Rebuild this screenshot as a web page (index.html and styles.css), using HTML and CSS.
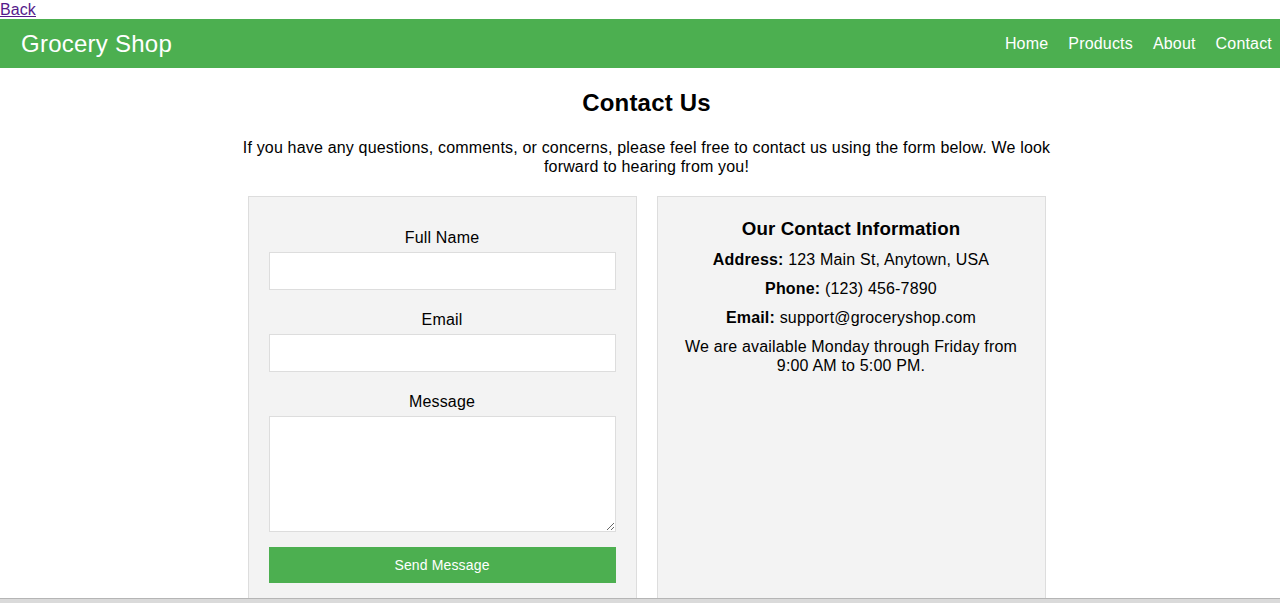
FILE: index.html
```html
<!DOCTYPE html>
<html lang="en">
<head>
<meta charset="utf-8">
<title>Contact Us - Grocery Shop</title>
<link rel="stylesheet" href="styles.css">
</head>
<body>
<a class="back" href="#">Back</a>
<header class="site-header">
  <h1 class="brand">Grocery Shop</h1>
  <nav class="nav">
    <a href="#">Home</a>
    <a href="#">Products</a>
    <a href="#">About</a>
    <a href="#">Contact</a>
  </nav>
</header>
<main class="main">
  <div class="container">
    <h2 class="title">Contact Us</h2>
    <p class="intro">If you have any questions, comments, or concerns, please feel free to contact us using the form below. We look forward to hearing from you!</p>
    <div class="panels">
      <form class="panel form">
        <div class="field">
          <label for="name">Full Name</label>
          <input id="name" type="text">
        </div>
        <div class="field">
          <label for="email">Email</label>
          <input id="email" type="email">
        </div>
        <div class="field field-msg">
          <label for="msg">Message</label>
          <textarea id="msg"></textarea>
        </div>
        <button type="button" class="send">Send Message</button>
      </form>
      <section class="panel info">
        <h3>Our Contact Information</h3>
        <p><strong>Address:</strong> 123 Main St, Anytown, USA</p>
        <p><strong>Phone:</strong> (123) 456-7890</p>
        <p><strong>Email:</strong> support@groceryshop.com</p>
        <p>We are available Monday through Friday from 9:00 AM to 5:00 PM.</p>
      </section>
    </div>
  </div>
</main>
<div class="bottom-edge"></div>
</body>
</html>
```

FILE: styles.css
```css
html, body {
  margin: 0;
  padding: 0;
}
body {
  font-family: "Liberation Sans", Arial, sans-serif;
  font-size: 16px;
  line-height: 1.2;
  letter-spacing: 0.18px;
  color: #000;
  background: #fff;
}
.back {
  display: block;
  color: #551a8b;
  text-decoration: underline;
  line-height: 19px;
  height: 19px;
  letter-spacing: 0.1px;
}
.site-header {
  background: #4caf50;
  display: flex;
  align-items: center;
  justify-content: space-between;
  height: 49px;
  box-sizing: border-box;
  padding: 1px 8px 0 21px;
}
.brand {
  margin: 0;
  font-size: 24px;
  font-weight: normal;
  letter-spacing: 0.25px;
  color: #fff;
}
.nav {
  display: flex;
  gap: 20px;
}
.nav a {
  color: #fff;
  text-decoration: none;
  font-size: 16px;
}
.main {
  padding: 20px 0 0 13px;
}
.container {
  width: 820px;
  margin: 0 auto;
  text-align: center;
}
.title {
  margin: 0 0 21px;
  font-size: 24px;
  line-height: 29px;
  letter-spacing: 0.2px;
}
.intro {
  margin: 0 0 20px;
  line-height: 19px;
}
.panels {
  display: flex;
  gap: 20px;
  width: 798px;
  margin: 0 auto;
}
.panel {
  flex: 1;
  background: #f3f3f3;
  border: 1px solid #dddddd;
  padding: 20px;
  min-height: 420px;
}
.form {
  padding-top: 32px;
  display: flex;
  flex-direction: column;
}
.field {
  display: flex;
  flex-direction: column;
  margin-bottom: 21px;
}
.field label {
  line-height: 18px;
  margin-bottom: 5px;
}
.field input,
.field textarea {
  box-sizing: border-box;
  width: 100%;
  height: 38px;
  border: 1px solid #dddddd;
  background: #fff;
  font: inherit;
  margin: 0;
}
.field textarea {
  height: 116px;
  resize: vertical;
}
.field-msg {
  margin-bottom: 15px;
}
.send {
  height: 36px;
  width: 100%;
  background: #4caf50;
  color: #fff;
  border: none;
  font-family: "Liberation Sans", Arial, sans-serif;
  font-size: 14px;
  letter-spacing: 0.15px;
}
.info {
  padding-top: 20px;
}
.info h3 {
  margin: 0 0 9px;
  font-size: 18.72px;
  line-height: 24px;
  letter-spacing: 0.1px;
}
.info p {
  margin: 10px 0;
  line-height: 19px;
}
.info h3 + p {
  margin-top: 9px;
}
.bottom-edge {
  position: fixed;
  left: 0;
  right: 0;
  bottom: 0;
  height: 4px;
  background: #dadada;
  border-top: 1px solid #b5b5b5;
}
```
